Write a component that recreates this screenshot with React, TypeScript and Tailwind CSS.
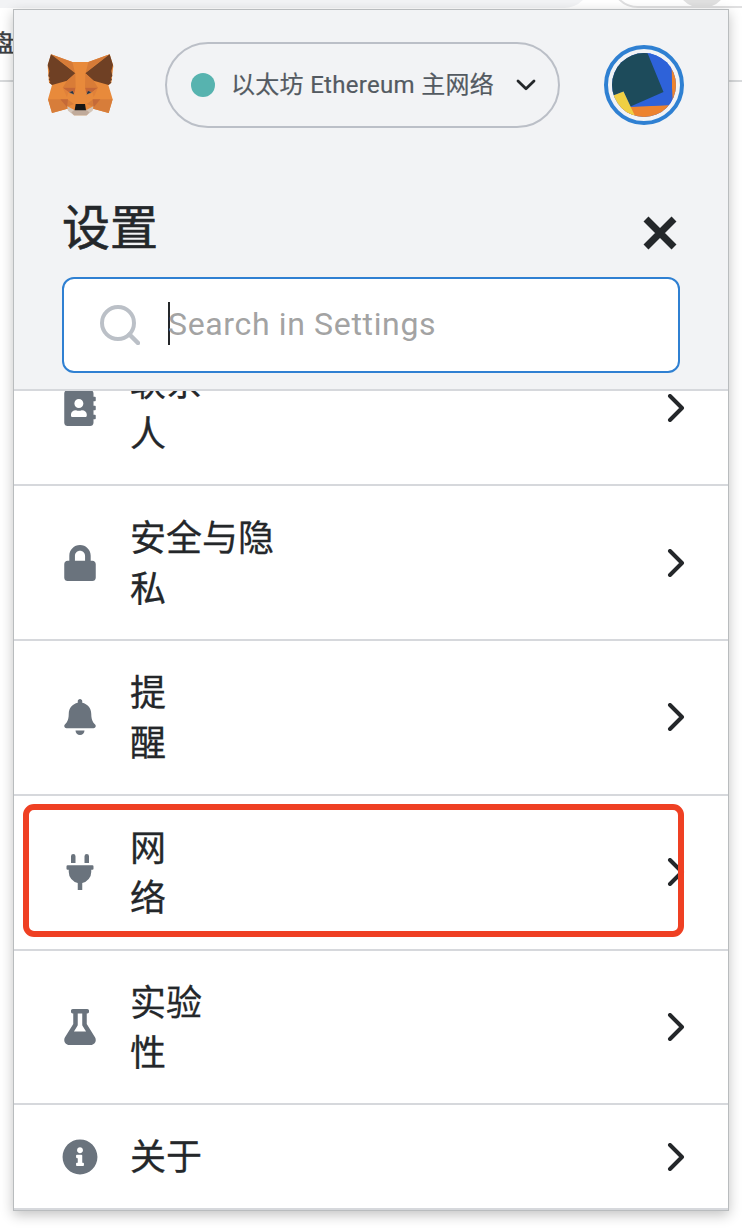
import React from "react";
import { FaAddressBook, FaLock, FaBell, FaPlug, FaFlask, FaInfoCircle } from "react-icons/fa";
import type { IconType } from "react-icons";

type Item = { icon: IconType; lines: string[]; highlighted?: boolean };

const items: Item[] = [
  { icon: FaAddressBook, lines: ["联系", "人"] },
  { icon: FaLock, lines: ["安全与隐", "私"] },
  { icon: FaBell, lines: ["提", "醒"] },
  { icon: FaPlug, lines: ["网", "络"], highlighted: true },
  { icon: FaFlask, lines: ["实验", "性"] },
  { icon: FaInfoCircle, lines: ["关于"] },
];

function Fox() {
  return (
    <svg className="h-[66px] w-[70px] shrink-0" viewBox="49 36 210 198">
      <path fill="#e88a3b" d="M64 43L128 66H176L240 43L251 78L245 128L236 135L249 178L237 219L190 206L171 226H133L113 206L67 219L55 178L67 135L58 128L54 78Z" />
      <path fill="#d67b38" d="M64 43L128 66L136 98L104 72ZM240 43L176 66L168 98L200 72Z" />
      <path fill="#6f4024" d="M64 43L137 100L112 122L67 135L59 128L62 123L57 120L60 113L56 108L59 93L54 75ZM240 43L167 100L192 122L237 135L245 128L242 123L247 120L244 113L248 108L245 93L250 75Z" />
      <path fill="#d97c37" d="M137 100L112 122L99 143L138 143ZM167 100L192 122L205 143L166 143Z" />
      <path fill="#c46637" d="M99 143H138L134 160L116 156ZM205 143H166L170 160L188 156Z" />
      <path fill="#e0813a" d="M99 143L116 156L112 172ZM205 143L188 156L192 172Z" />
      <path fill="#d77d3a" d="M55 178H113L133 192L113 200V206L67 219ZM249 178H191L171 192L191 200V206L237 219Z" />
      <path fill="#c56a38" d="M92 178H115L112 202ZM212 178H189L192 202Z" />
      <path fill="#e88a3b" d="M138 143H166L171 192H133Z" />
      <path fill="#d5c6b9" d="M113 199L134 210H170L191 199L189 212L171 226H133L115 212Z" />
      <path fill="#c0aa9a" d="M125 217L134 210H170L179 217L171 226H133Z" />
      <path fill="#8f7563" d="M117 156L128 153L134 164L121 160ZM187 156L176 153L170 164L183 160Z" />
      <path fill="#233447" d="M120 157L129 153L133 163ZM184 157L175 153L171 163Z" />
      <path fill="#161616" d="M138 192H166L169 211H135Z" />
    </svg>
  );
}

function Avatar() {
  return (
    <div className="flex size-20 shrink-0 items-center justify-center rounded-full border-4 border-[#2f80d2]">
      <svg className="size-16 shrink-0 rounded-full" viewBox="0 0 64 64">
        <rect width="64" height="64" fill="#2e62d9" />
        <path fill="#ed832f" d="M59 0H64V64H0V54L56 52L60.500 52Z" />
        <path fill="#2e62d9" d="M30 0H59L60.500 52L18 54Z" />
        <path fill="#1d4b5b" d="M0 0H35.500L51.500 39L18.500 53.500L11.500 38.500L0 43Z" />
        <path fill="#f0cf43" d="M0 43L11.500 38.500L23 63V64H0Z" />
      </svg>
    </div>
  );
}

function Backdrop() {
  return (
    <div className="absolute inset-x-0 top-0 h-[82px] overflow-hidden border-b-2 border-[#d8dadc] bg-white">
      <div className="absolute -top-[72px] -left-[40px] h-[80px] w-[630px] rounded-[26px] bg-[#f2f3f5]" />
      <div className="absolute -top-[50px] left-[610px] h-[58px] w-[220px] rounded-[28px] border-2 border-[#e0e0e1] bg-white" />
      <div className="absolute -top-[44px] left-[676px] size-[52px] rounded-full bg-[#e0e0e0]" />
      <span className="absolute top-[32px] -left-[9px] text-[24px] leading-[24px] text-[#3c4043] [-webkit-text-stroke:0.4px]">盘</span>
    </div>
  );
}

export default function App() {
  return (
    <div className="relative h-[1228px] w-[742px] overflow-hidden bg-white pt-[9px] pl-[13px] font-['Roboto','Noto_Sans_CJK_SC',sans-serif] text-[#24272a]">
      <Backdrop />
      <div className="relative flex h-[1202px] w-[716px] flex-col overflow-hidden border border-[#b9bcbe] bg-white shadow-[0_4px_12px_rgba(0,0,0,0.24)]">
        <header className="h-[381px] shrink-0 border-b-2 border-[#d6d8dc] bg-[#f2f3f5]">
          <div className="flex h-[150px] items-center pl-8">
            <Fox />
            <div className="ml-[49px] flex h-[86px] w-[395px] items-center rounded-full border-2 border-[#bbbfc7] pl-6">
              <span className="size-6 rounded-full bg-[#57b3af]" />
              <span className="ml-4 w-[264px] text-[24px] leading-8 tracking-[0.3px] whitespace-nowrap text-[#535a61] [-webkit-text-stroke:0.2px]">以太坊 Ethereum 主网络</span>
              <svg className="ml-[21px] h-3 w-5 shrink-0" viewBox="0 0 20 12" fill="none" stroke="#24272a" strokeWidth="2.8" strokeLinecap="round" strokeLinejoin="round">
                <path d="M2 2L10 9.800L18 2" />
              </svg>
            </div>
            <div className="ml-11"><Avatar /></div>
          </div>
          <div className="flex h-[117px] justify-between pr-[51px] pl-12">
            <h1 className="pt-[34px] text-[48px] leading-[70px] [-webkit-text-stroke:0.6px]">设置</h1>
            <svg className="mt-[56px] size-[34px]" viewBox="0 0 34 34" stroke="#24272a" strokeWidth="7">
              <path d="M3 3L31 31M31 3L3 31" />
            </svg>
          </div>
          <div className="ml-12 flex h-24 w-[618px] items-center rounded-xl border-2 border-[#2f80d2] bg-white pl-[36px]">
            <svg className="size-10" viewBox="0 0 40 40" fill="none" stroke="#bbc0c7" strokeWidth="4">
              <circle cx="18" cy="18" r="16" />
              <path d="M29.500 29.500L38 38" strokeWidth="4.500" strokeLinecap="round" />
            </svg>
            <span className="mb-[3px] ml-7 h-[43px] w-0.5 bg-[#24272a]" />
            <span className="mb-0.5 -ml-0.5 text-[32px] leading-10 tracking-[0.65px] text-[#a3a3a3]">Search in Settings</span>
          </div>
        </header>
        <main className="min-h-0 flex-1 overflow-hidden">
          <nav className="-mt-[59.6px]">
            {items.map(({ icon: Icon, lines, highlighted }) => (
              <div key={lines[0]} className="relative flex items-center border-b-2 border-[#d6d8dc] pt-7 pr-[43px] pb-6 pl-12">
                <span className="-mt-1 flex w-9 justify-center text-[#6a737d]"><Icon className="h-9 w-auto" /></span>
                <span className="ml-8 flex-1 text-[36px] leading-[50.4px] [-webkit-text-stroke:0.3px]">
                  {lines.map((line) => <span key={line} className="block">{line}</span>)}
                </span>
                <svg className="-mt-1 h-7 w-[18px]" viewBox="0 0 18 28" fill="none" stroke="#24272a" strokeWidth="4" strokeLinecap="round" strokeLinejoin="round">
                  <path d="M3 2L15 14L3 26" />
                </svg>
                {highlighted && <div className="absolute top-[8px] left-[9px] h-[133px] w-[661px] rounded-[11px] border-6 border-[#ef4023]" />}
              </div>
            ))}
          </nav>
        </main>
      </div>
    </div>
  );
}
